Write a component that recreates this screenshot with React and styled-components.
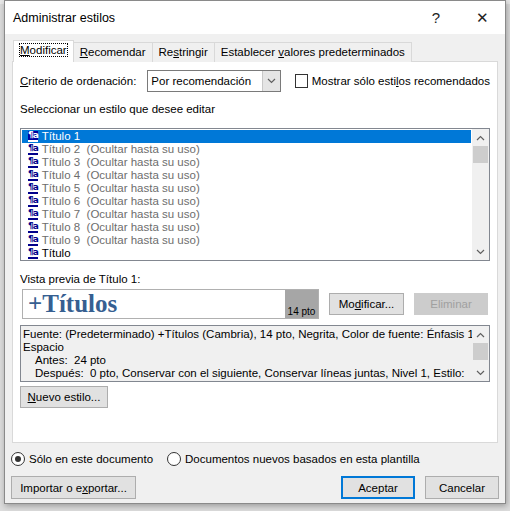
import React from "react";
import styled, { createGlobalStyle } from "styled-components";

const G = createGlobalStyle`
  body{margin:0;background:#dcdcdc;font-family:"Liberation Sans",Arial,sans-serif;font-size:11.5px;color:#000;}
  *{white-space:nowrap;}
`;
const Wrap = styled.div`width:510px;height:511px;overflow:hidden;position:relative;`;
const BackBar = styled.div`height:4px;background:#e8e8e8;`;
const Dialog = styled.div`
  position:absolute;left:4px;top:0;width:500px;height:502px;background:#f0f0f0;
  border:1px solid #8a8a8a;box-shadow:1px 2px 6px rgba(0,0,0,.3);display:flex;flex-direction:column;
`;
const TitleBar = styled.div`height:33px;background:#fff;display:flex;align-items:center;padding-left:8px;font-size:12.5px;`;
const TitleText = styled.div`flex:1;`;
const TBtn = styled.div`width:46px;text-align:center;font-size:15px;color:#222;`;
const Tabs = styled.div`display:flex;margin:7px 0 0 8px;height:21px;align-items:flex-end;`;
const Tab = styled.div`
  padding:0 6px;height:${p=>p.$active?21:19}px;line-height:19px;border:1px solid #d9d9d9;border-bottom:none;
  background:${p=>p.$active?"#fff":"#f0f0f0"};margin-right:-1px;position:relative;z-index:${p=>p.$active?2:1};
  span{${p=>p.$active?"outline:1px dotted #000;":""}}
`;
const U = styled.u``;
const Panel = styled.div`
  margin:-1px 7px 0 7px;background:#fff;border:1px solid #d9d9d9;height:372px;padding:8px 7px 0 7px;
`;
const Row = styled.div`display:flex;align-items:center;`;
const Select = styled.div`
  width:152px;height:22px;border:1px solid #7a7a7a;display:flex;align-items:center;margin-left:11px;box-sizing:border-box;
`;
const SelText = styled.div`flex:1;padding-left:3px;`;
const SelArrow = styled.div`width:17px;height:20px;background:#e5e5e5;border-left:1px solid #c8c8c8;display:flex;align-items:center;justify-content:center;`;
const Check = styled.div`width:12px;height:12px;border:1px solid #333;background:#fff;margin:0 4px 0 14px;`;
const Label = styled.div`margin:${p=>p.$m||0};`;
const List = styled.div`
  margin-top:13px;height:133px;border:1px solid #828790;display:flex;box-sizing:border-box;
`;
const Items = styled.div`flex:1;padding:1px 1px;`;
const Item = styled.div`
  height:13px;line-height:13px;display:flex;align-items:center;padding-left:6px;
  background:${p=>p.$sel?"#0078d7":"transparent"};color:${p=>p.$sel?"#fff":p.$dim?"#6d6d6d":"#000"};
`;
const Para = styled.span`
  font:bold 9px "DejaVu Sans",sans-serif;color:#00008b;border-bottom:2px solid #00008b;line-height:9px;
  margin-right:4px;letter-spacing:-1px;${p=>p.$sel?"color:#fff;border-color:#fff;background:#0000a0;":""}
`;
const Scroll = styled.div`width:17px;display:flex;flex-direction:column;align-items:center;background:#f0f0f0;`;
const Arrow = styled.div`height:17px;display:flex;align-items:center;justify-content:center;`;
const Thumb = styled.div`width:15px;height:${p=>p.$h}px;background:#cdcdcd;`;
const Track = styled.div`flex:1;width:100%;display:flex;flex-direction:column;align-items:center;`;
const PrevRow = styled.div`display:flex;align-items:center;margin-top:4px;`;
const Preview = styled.div`
  width:297px;height:30px;border:1px solid #b0b0b0;margin-left:2px;display:flex;box-sizing:border-box;
`;
const PrevText = styled.div`flex:1;font:bold 25px "Liberation Serif","DejaVu Serif",serif;color:#365f91;padding-left:5px;line-height:28px;`;
const PtTag = styled.div`width:33px;background:#a6a6a6;font-size:10px;display:flex;align-items:flex-end;justify-content:center;padding-bottom:1px;`;
const Btn = styled.div`
  width:${p=>p.$w}px;height:${p=>p.$h||22}px;box-sizing:border-box;display:flex;align-items:center;justify-content:center;
  background:${p=>p.$dis?"#cccccc":"#e1e1e1"};color:${p=>p.$dis?"#a0a0a0":"#000"};
  border:${p=>p.$def?"2px solid #0078d7":p.$dis?"1px solid #cccccc":"1px solid #adadad"};margin-left:${p=>p.$ml||0}px;
  margin-top:${p=>p.$mt||0}px;
`;
const Desc = styled.div`
  margin-top:6px;height:57px;border:1px solid #828790;background:#f0f0f0;display:flex;box-sizing:border-box;
`;
const DescText = styled.div`flex:1;padding:2px 2px;line-height:13px;overflow:hidden;`;
const Indent = styled.div`padding-left:12px;`;
const Radio = styled.div`
  width:12px;height:12px;border-radius:50%;border:1px solid #333;background:#fff;margin:0 4px 0 ${p=>p.$ml||0}px;
  display:flex;align-items:center;justify-content:center;
  &::after{content:"";width:6px;height:6px;border-radius:50%;background:${p=>p.$on?"#333":"transparent"};}
`;
const Bottom = styled.div`display:flex;align-items:center;padding:0 6px;margin-top:${p=>p.$mt}px;`;
const Spacer = styled.div`flex:1;`;

const chev = (up)=> (
  <svg width="9" height="6" viewBox="0 0 9 6"><path d={up?"M1 5 L4.5 1.5 L8 5":"M1 1 L4.5 4.5 L8 1"} stroke="#606060" fill="none" strokeWidth="1.2"/></svg>
);

export default function App(){
  const titles=[2,3,4,5,6,7,8,9];
  return (<Wrap><G/><BackBar/>
    <Dialog>
      <TitleBar><TitleText>Administrar estilos</TitleText><TBtn>?</TBtn><TBtn>✕</TBtn></TitleBar>
      <Tabs>
        <Tab $active><span><U>M</U>odificar</span></Tab>
        <Tab><U>R</U>ecomendar</Tab>
        <Tab>Re<U>s</U>tringir</Tab>
        <Tab>Establecer <U>v</U>alores predeterminados</Tab>
      </Tabs>
      <Panel>
        <Row>
          <Label><U>C</U>riterio de ordenación:</Label>
          <Select><SelText>Por recomendación</SelText><SelArrow>{chev(false)}</SelArrow></Select>
          <Check/><Label>Mostrar sólo esti<U>l</U>os recomendados</Label>
        </Row>
        <Label $m="11px 0 0 0">Seleccionar un estilo que desee editar</Label>
        <List>
          <Items>
            <Item $sel><Para $sel>¶a</Para>Título 1</Item>
            {titles.map(n=><Item key={n} $dim><Para>¶a</Para>Título {n}&nbsp; (Ocultar hasta su uso)</Item>)}
            <Item><Para>¶a</Para>Título</Item>
          </Items>
          <Scroll><Arrow>{chev(true)}</Arrow><Track><Thumb $h={17}/></Track><Arrow>{chev(false)}</Arrow></Scroll>
        </List>
        <Label $m="12px 0 0 0">Vista previa de Título 1:</Label>
        <PrevRow>
          <Preview><PrevText>+Títulos</PrevText><PtTag>14 pto</PtTag></Preview>
          <Btn $w={75} $ml={10}>Mo<U>d</U>ificar...</Btn>
          <Btn $w={74} $ml={10} $dis>Eliminar</Btn>
        </PrevRow>
        <Desc>
          <DescText>
            Fuente: (Predeterminado) +Títulos (Cambria), 14 pto, Negrita, Color de fuente: Énfasis 1,
            <div>Espacio</div>
            <Indent>Antes:&nbsp; 24 pto</Indent>
            <Indent>Después:&nbsp; 0 pto, Conservar con el siguiente, Conservar líneas juntas, Nivel 1, Estilo:</Indent>
          </DescText>
          <Scroll><Arrow>{chev(true)}</Arrow><Track><Thumb $h={17}/></Track><Arrow>{chev(false)}</Arrow></Scroll>
        </Desc>
        <Btn $w={88} $h={22} $mt={4}><U>N</U>uevo estilo...</Btn>
      </Panel>
      <Bottom $mt={9}><Radio $on/><Label>Sólo en este documento</Label><Radio $ml={14}/><Label>Documentos nuevos basados en esta plantilla</Label></Bottom>
      <Bottom $mt={10}>
        <Btn $w={125} $h={23}>Importar o e<U>x</U>portar...</Btn>
        <Spacer/>
        <Btn $w={74} $h={23} $def>Aceptar</Btn>
        <Btn $w={74} $h={23} $ml={10}>Cancelar</Btn>
      </Bottom>
    </Dialog>
  </Wrap>);
}
